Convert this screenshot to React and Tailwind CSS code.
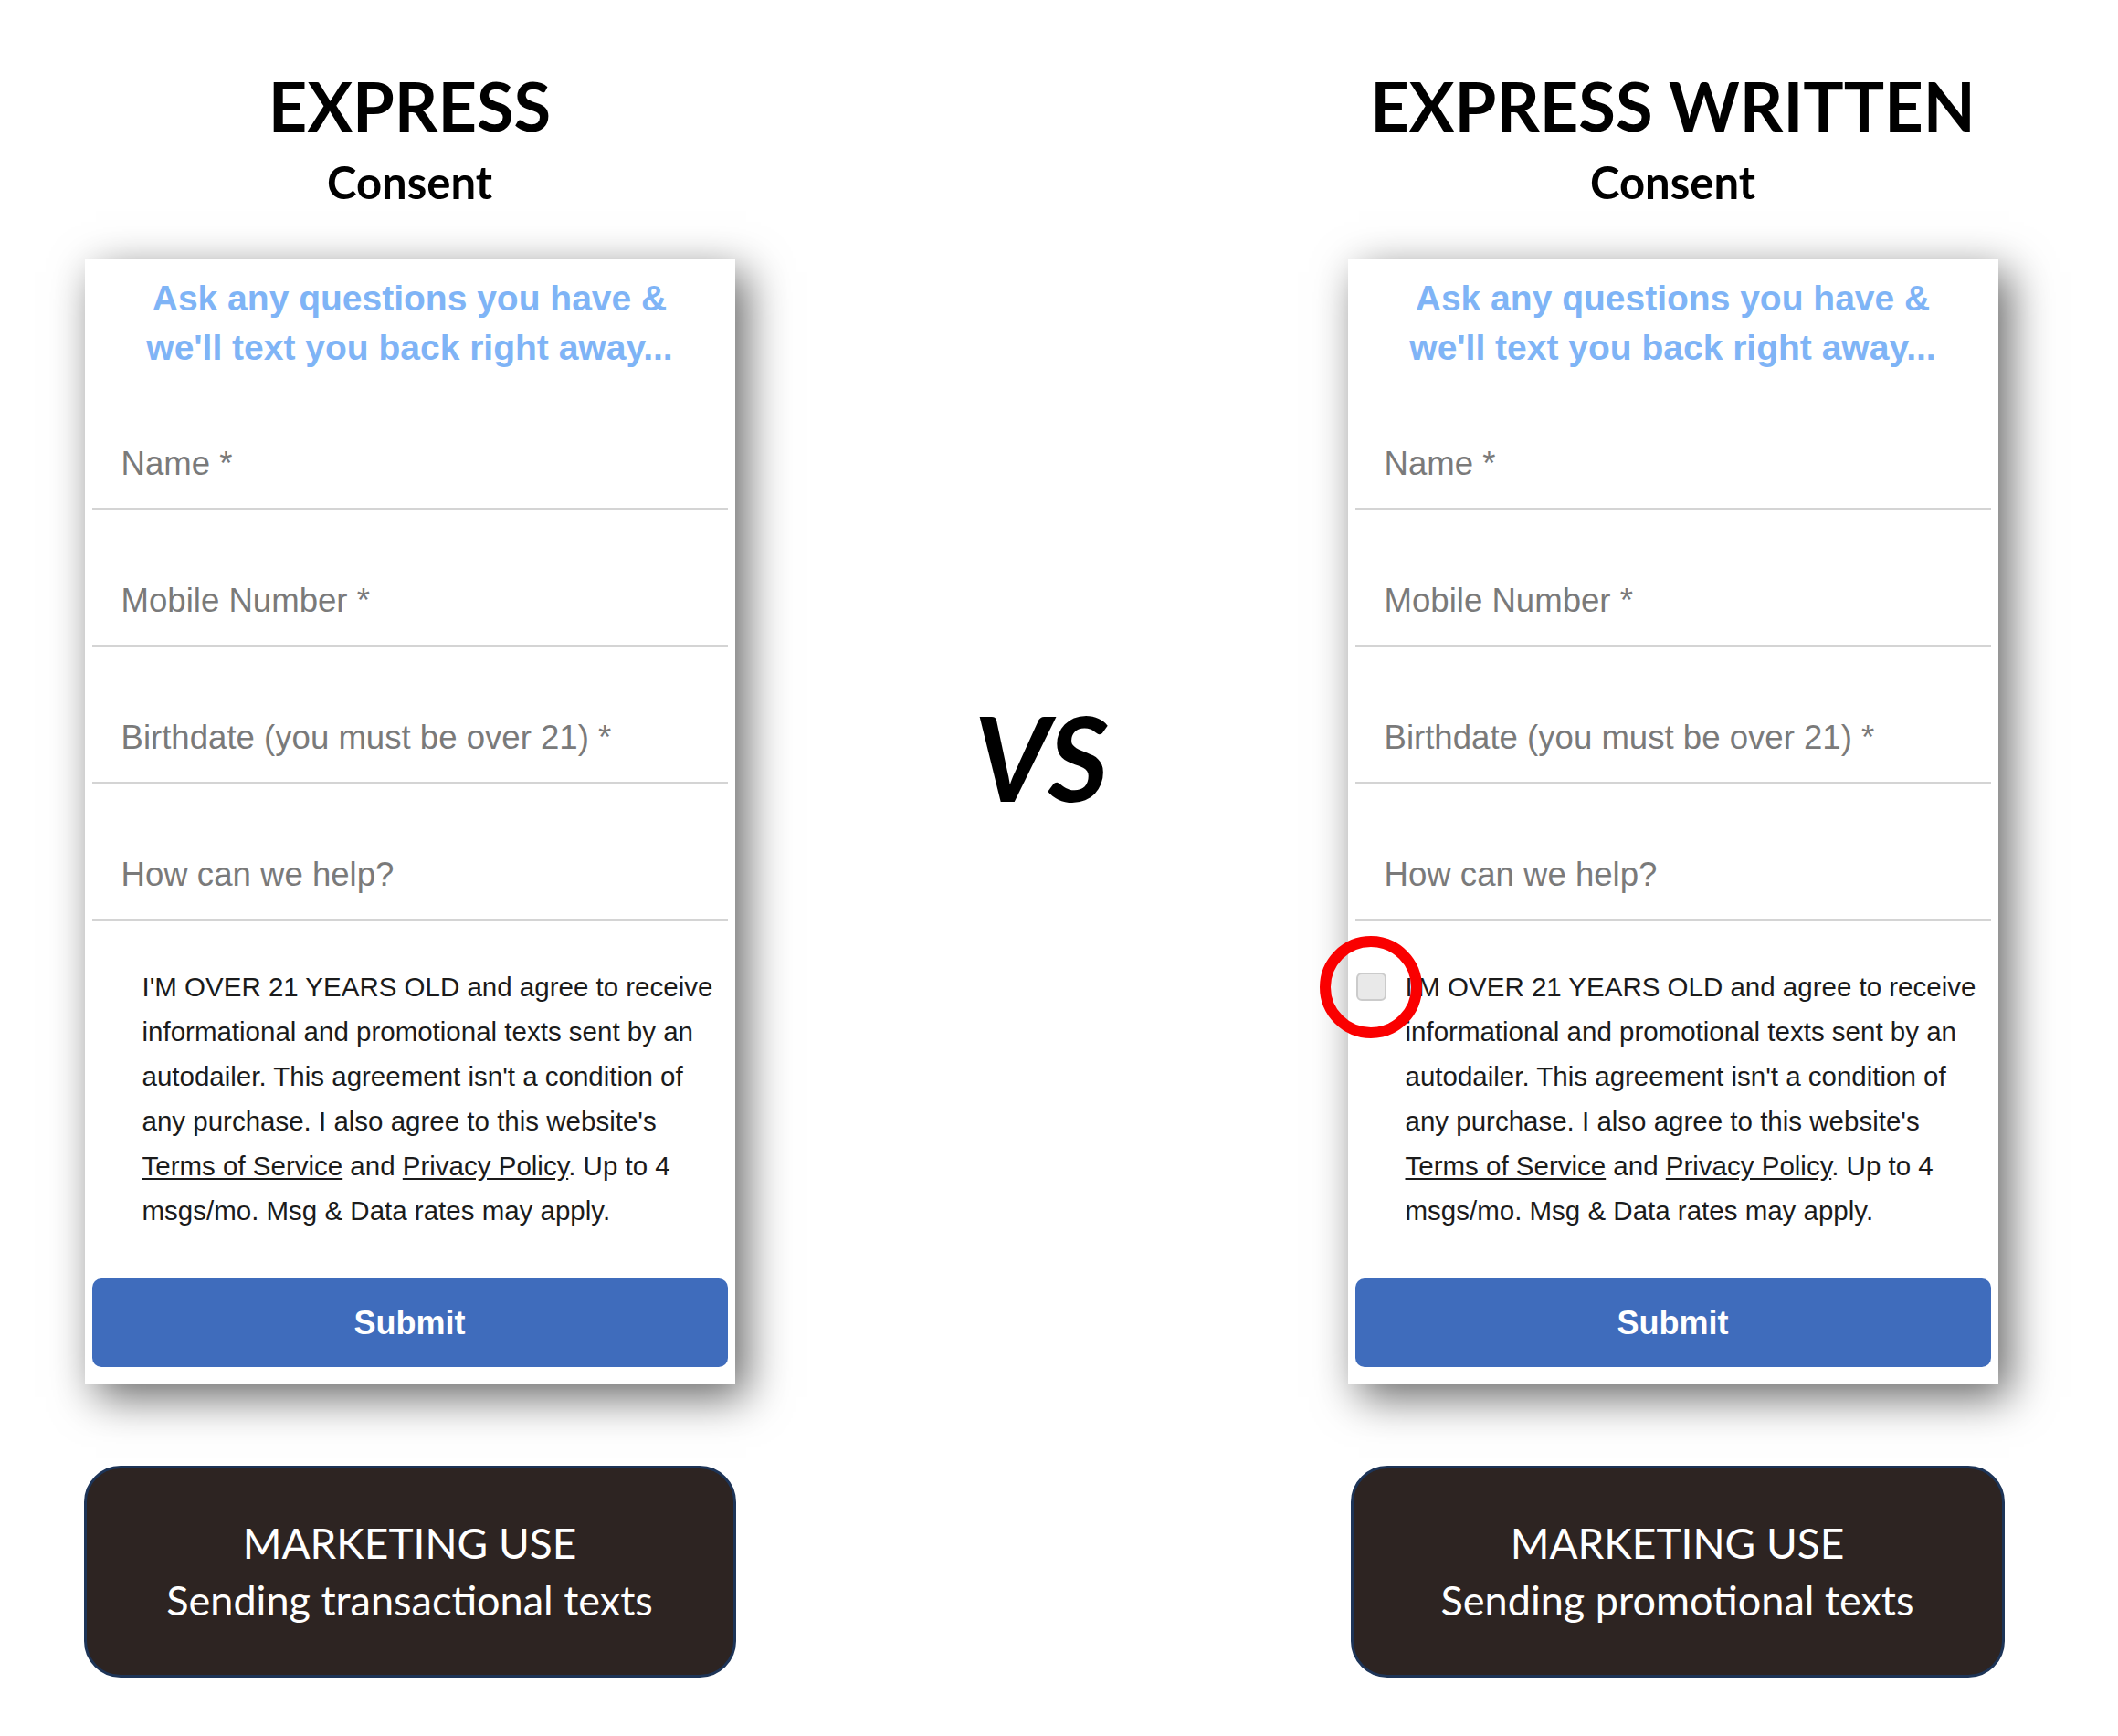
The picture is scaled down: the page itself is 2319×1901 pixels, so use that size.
const FIELDS = [
  "Name *",
  "Mobile Number *",
  "Birthdate (you must be over 21) *",
  "How can we help?",
];

function Checkbox() {
  return (
    <div className="relative mt-[9px] ml-[1px] w-[33px] h-[31px]">
      <div className="w-full h-full rounded-[6px] border-2 border-[#cbcbcb] bg-[#e9e9e9]" />
      {/* red highlight ring drawn over the checkbox */}
      <div className="absolute left-1/2 top-1/2 -translate-x-1/2 -translate-y-1/2 w-[112px] h-[112px] rounded-full border-[12px] border-[#fa0000]" />
    </div>
  );
}

function FormCard({ withCheckbox }) {
  return (
    <div className="relative w-[712px] h-[1232px] bg-white px-2 pt-[16px] flex flex-col shadow-[12px_14px_45px_rgba(0,0,0,0.6)] font-['Liberation_Sans',Arial,sans-serif]">
      <h2 className="text-center font-bold text-[39px] leading-[54px] text-[#7fb4f6]">
        Ask any questions you have &amp;
        <br />
        we'll text you back right away...
      </h2>

      {FIELDS.map((label) => (
        <div
          key={label}
          className="h-[150px] border-b-2 border-[#d4d4d4] pt-[78px] pl-[32px] text-[36.6px] leading-[44px] text-[#7a7a7a]"
        >
          {label}
        </div>
      ))}

      <div className="flex pt-[48px]">
        <div className="w-[55px] shrink-0">{withCheckbox && <Checkbox />}</div>
        <p className="w-[636px] text-[29.5px] leading-[49px] text-[#1b1b1b]">
          I'M OVER 21 YEARS OLD and agree to receive informational and
          promotional texts sent by an autodailer. This agreement isn't a
          condition of any purchase. I also agree to this website's
          <br />
          <span className="underline underline-offset-[3px]">Terms of Service</span> and{" "}
          <span className="underline underline-offset-[3px]">Privacy Policy</span>. Up to 4
          <br />
          msgs/mo. Msg &amp; Data rates may apply.
        </p>
      </div>

      <button className="mt-[50px] h-[97px] w-full rounded-[10px] bg-[#3f6cbc] text-white font-bold text-[36px]">
        Submit
      </button>
    </div>
  );
}

function UseBox({ text, className = "" }) {
  return (
    <div
      className={`mt-[89px] h-[232px] rounded-[40px] border-[3px] border-[#1d3457] bg-[#2d2422] flex flex-col items-center justify-center text-white font-['Lato',sans-serif] ${className}`}
    >
      <div className="text-[46px] leading-[63px] whitespace-nowrap">MARKETING USE</div>
      <div className="text-[45px] leading-[63px] whitespace-nowrap">{text}</div>
    </div>
  );
}

function Column({ title, withCheckbox, useText, boxClass }) {
  return (
    <div className="w-[713px] flex flex-col items-center">
      <div className="h-[284px] pt-[79px] flex flex-col items-center text-black font-['Lato',sans-serif] font-bold">
        <h1 className="text-[74px] leading-[74px] whitespace-nowrap">{title}</h1>
        <p className="mt-[22px] text-[49px] leading-[49px] whitespace-nowrap">Consent</p>
      </div>
      <FormCard withCheckbox={withCheckbox} />
      <UseBox text={useText} className={boxClass} />
    </div>
  );
}

export default function App() {
  return (
    <div className="w-[2319px] min-h-[1901px] bg-white flex pl-[92px]">
      <Column
        title="EXPRESS"
        useText="Sending transactional texts"
        boxClass="w-[714px]"
      />
      <div className="w-[670px] pt-[765px] flex justify-center">
        <span className="font-['Lato',sans-serif] font-bold italic text-[128px] leading-none text-black">
          VS
        </span>
      </div>
      <Column
        title="EXPRESS WRITTEN"
        withCheckbox
        useText="Sending promotional texts"
        boxClass="w-[716px] ml-[10px]"
      />
    </div>
  );
}
